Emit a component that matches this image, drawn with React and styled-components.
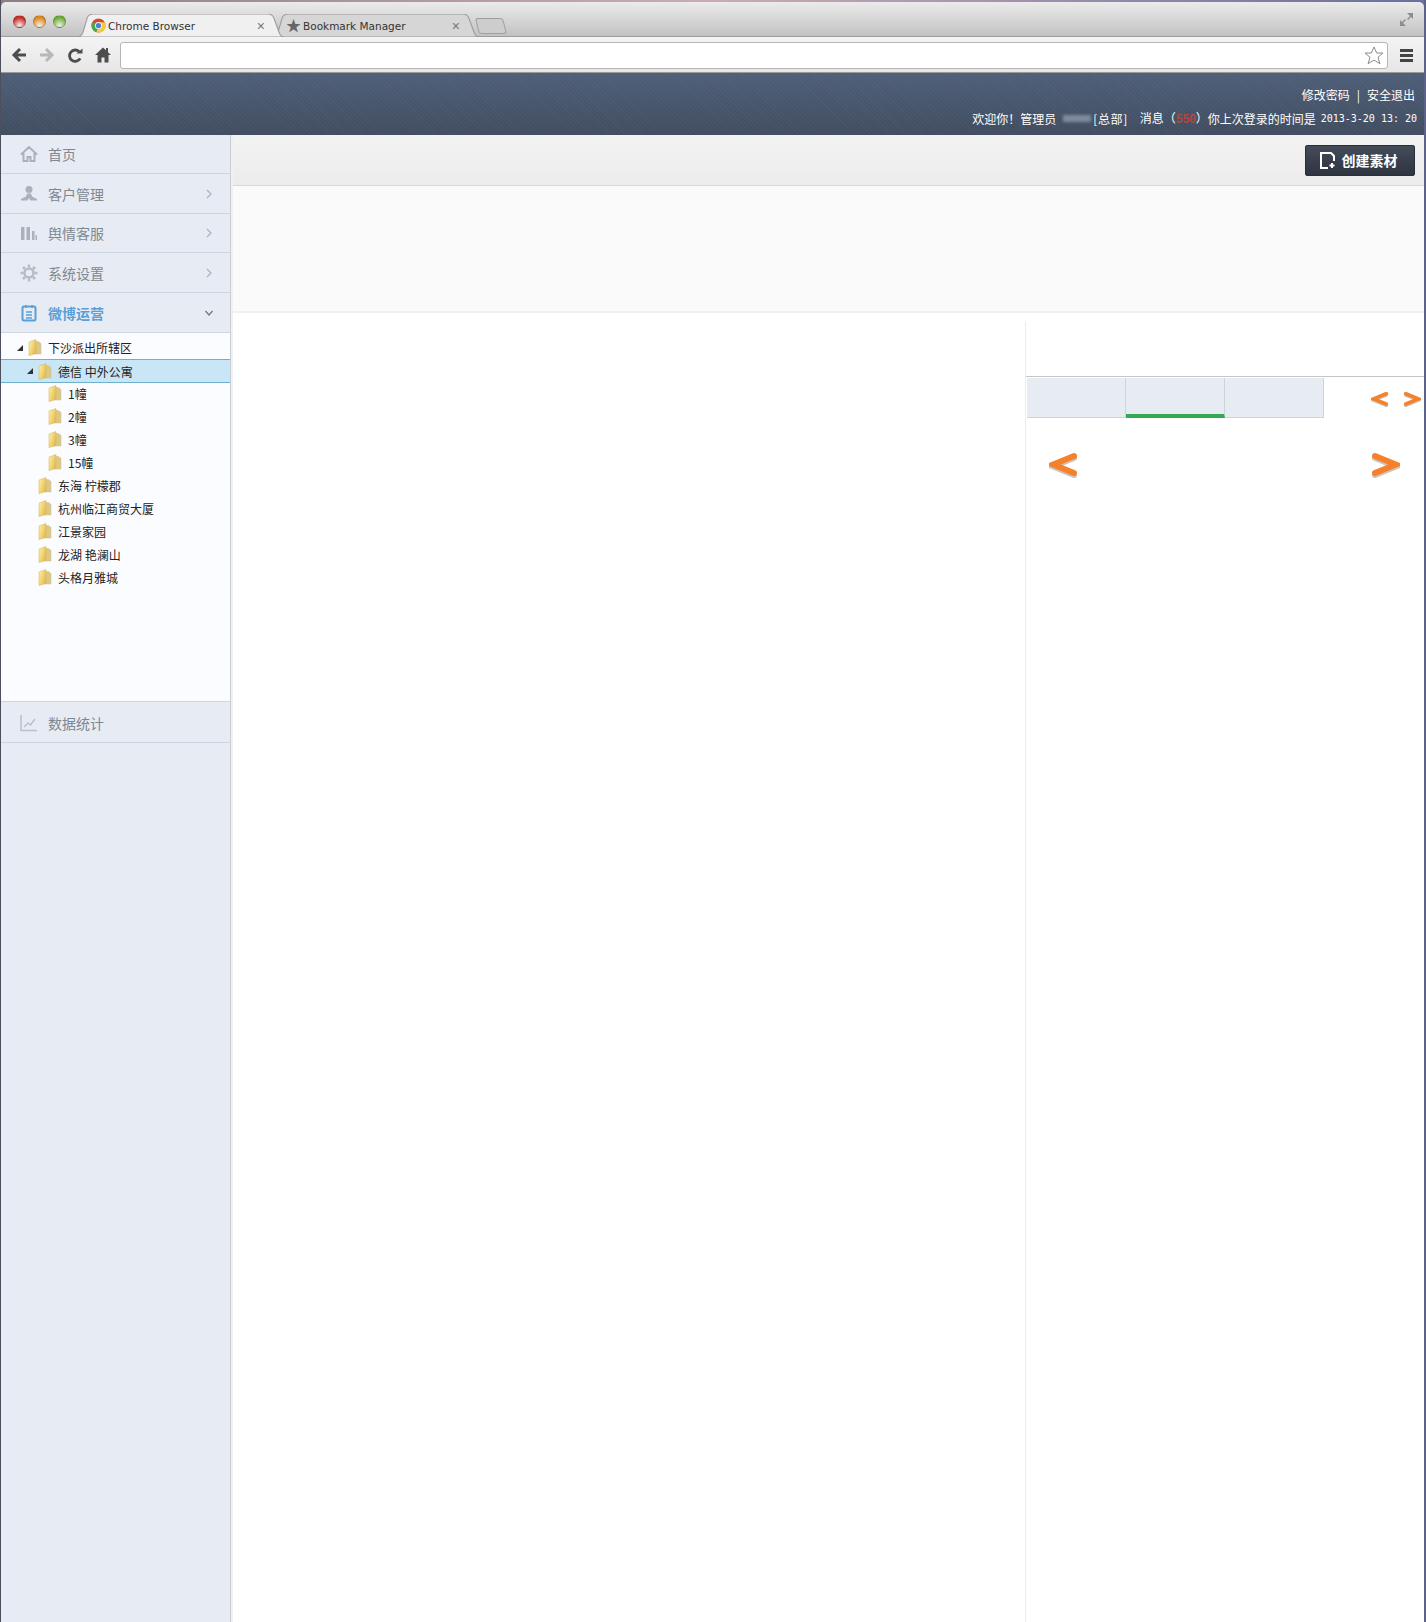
import React from "react";
import styled, { createGlobalStyle } from "styled-components";

const Global = createGlobalStyle`
html, body { margin: 0; padding: 0; background: #fff; }
body { font-family: "Liberation Sans", "Noto Sans CJK SC", sans-serif; }
* { box-sizing: border-box; }
`;

const menuTop = [
    { name: "首页", icon: "home", h: 39 },
    { name: "客户管理", icon: "user", h: 40, arrow: "right" },
    { name: "舆情客服", icon: "bars", h: 39, arrow: "right" },
    { name: "系统设置", icon: "gear", h: 40, arrow: "right" },
    { name: "微博运营", icon: "note", h: 40, arrow: "down", active: true },
];

const tree = [
    { name: "下沙派出所辖区", level: 0, open: true },
    { name: "德信 中外公寓", level: 1, open: true, selected: true },
    { name: "1幢", level: 2 },
    { name: "2幢", level: 2 },
    { name: "3幢", level: 2 },
    { name: "15幢", level: 2 },
    { name: "东海 柠檬郡", level: 1 },
    { name: "杭州临江商贸大厦", level: 1 },
    { name: "江景家园", level: 1 },
    { name: "龙湖 艳澜山", level: 1 },
    { name: "头格月雅城", level: 1 },
];

const tabPath = "M0 23C4 23 5 21 6 18L10 4C11 1 13 0 16 0H188C191 0 193 1 194 4L199 18C200 21 201 23 204 23Z";

function MenuIcon({ type }) {
    const c = type === "note" ? "#5a9fd8" : "#a9b1bc";
    if (type === "home")
        return (
            <svg width="18" height="18" viewBox="0 0 18 18" fill="none" stroke={c} strokeWidth="2">
                <path d="M1 9.500 9 2l8 7.500M3.500 8v8h4v-4h3v4h4V8" />
            </svg>
        );
    if (type === "user")
        return (
            <svg width="18" height="18" viewBox="0 0 18 18" fill={c}>
                <circle cx="9" cy="4.500" r="3.500" />
                <path d="M7 8.500h4l1 3 5 2.500v1.500h-6.500L9 13l-1.500 2.500H1V14l5-2.500z" />
            </svg>
        );
    if (type === "bars")
        return (
            <svg width="18" height="18" viewBox="0 0 18 18" fill={c}>
                <path d="M1 3h3.500v13H1zM6.500 3H10v13H6.500zM12 7h2.500v9H12zM15.500 11H17v5h-1.500z" />
            </svg>
        );
    if (type === "gear")
        return (
            <svg width="18" height="18" viewBox="0 0 18 18" fill="none" stroke="#b6bcc5">
                <circle cx="9" cy="9" r="4.500" strokeWidth="2.500" />
                <path strokeWidth="2.500" d="M9 0.500v3M9 14.500v3M0.500 9h3M14.500 9h3M3 3l2 2M13 13l2 2M15 3l-2 2M5 13l-2 2" />
            </svg>
        );
    if (type === "note")
        return (
            <svg width="18" height="18" viewBox="0 0 18 18" fill="none" stroke={c} strokeWidth="2">
                <rect x="2.500" y="2.500" width="13" height="14" rx="1.500" />
                <path d="M6 1v3M12 1v3M6 8h6M6 11h6M6 14h6" strokeWidth="1.500" />
            </svg>
        );
    return (
        <svg width="18" height="18" viewBox="0 0 18 18" fill="none" stroke="#b9c0ca">
            <path strokeWidth="1.500" d="M1 1v15.500h16" />
            <path strokeWidth="1.500" d="M4 13l4-4 2.500 2L15 5" />
        </svg>
    );
}

function Chevron({ dir }) {
    return (
        <svg width="8" height="10" viewBox="0 0 8 10" fill="none" stroke={dir === "down" ? "#6d7680" : "#a9b1bc"} strokeWidth="1.200">
            <path d={dir === "down" ? "M0.500 3 4 7l3.500-4" : "M2 1l4 4-4 4"} />
        </svg>
    );
}

function Folder() {
    return (
        <svg width="14" height="17" viewBox="0 0 14 17">
            <defs>
                <linearGradient id="fold" x1="0" y1="0" x2="1" y2="0.600">
                    <stop offset="0" stopColor="#fff3ad" />
                    <stop offset="1" stopColor="#e6bd4a" />
                </linearGradient>
            </defs>
            <path d="M7 2.500h3.500l2.500 2V15H7z" fill="#dcc885" stroke="#c9bc94" strokeWidth="0.500" />
            <path d="M1 3 8 0.500v14L1 16.500z" fill="url(#fold)" stroke="#d8b04a" strokeWidth="0.500" />
        </svg>
    );
}

function ChromeLogo() {
    return (
        <svg width="15" height="15" viewBox="0 0 16 16">
            <circle cx="8" cy="8" r="7.500" fill="#d8473a" />
            <path d="M8 8 1.500 4.200A7.500 7.500 0 0 0 6 15.200z" fill="#4fa648" />
            <path d="M8 4.500h7a7.500 7.500 0 0 1-9 10.700z" fill="#f3c93f" />
            <circle cx="8" cy="8" r="3.800" fill="#eef2f6" />
            <circle cx="8" cy="8" r="2.800" fill="#4a80d0" />
        </svg>
    );
}

function Arrow({ dir, size }) {
    const w = size === "big" ? 28 : 17;
    const h = size === "big" ? 27 : 17;
    const d = dir === "left" ? "M25 4 4 12.500 25 21" : "M3 4l21 8.500L3 21";
    return (
        <svg width={w} height={h} viewBox="0 0 28 27" fill="none" strokeLinecap="round" strokeLinejoin="miter">
            <path d={d} stroke="#c9c4be" strokeWidth="6" transform="translate(0 2)" />
            <path d={d} stroke="#f5822a" strokeWidth="6" />
        </svg>
    );
}

export default function App() {
    return (
        <>
            <Global />
            <Page>
                <Browser>
                    <TabStrip>
                        <Lights>
                            <Light color="#c9302c" />
                            <Light color="#df8a1f" />
                            <Light color="#6fae35" />
                        </Lights>
                        <Tab active>
                            <TabShape viewBox="0 0 204 23" preserveAspectRatio="none">
                                <path d={tabPath} fill="#f0f0f0" stroke="#9a9a9a" />
                            </TabShape>
                            <TabIcon><ChromeLogo /></TabIcon>
                            <TabLabel>Chrome Browser</TabLabel>
                            <TabClose>×</TabClose>
                        </Tab>
                        <Tab>
                            <TabShape viewBox="0 0 204 23" preserveAspectRatio="none">
                                <path d={tabPath} fill="#d6d6d6" stroke="#9a9a9a" />
                            </TabShape>
                            <TabIcon><Star>★</Star></TabIcon>
                            <TabLabel>Bookmark Manager</TabLabel>
                            <TabClose>×</TabClose>
                        </Tab>
                        <NewTab />
                        <Expand>
                            <svg width="15" height="15" viewBox="0 0 15 15" fill="#8d8d8d">
                                <path d="M8 1h6v6l-2-2-3 3-1-1 3-3zM7 14H1V8l2 2 3-3 1 1-3 3z" />
                            </svg>
                        </Expand>
                    </TabStrip>
                    <Toolbar>
                        <NavIcons>
                            <svg width="16" height="16" viewBox="0 0 16 16" fill="none" stroke="#4d4d4d" strokeWidth="3">
                                <path d="M15 8H3M9 2 3 8l6 6" />
                            </svg>
                            <svg width="16" height="16" viewBox="0 0 16 16" fill="none" stroke="#b8b8b8" strokeWidth="3">
                                <path d="M1 8h12M7 2l6 6-6 6" />
                            </svg>
                            <svg width="16" height="17" viewBox="0 0 17 17" fill="none" stroke="#4d4d4d" strokeWidth="3">
                                <path d="M14 11.500A6 6 0 1 1 13 4.500" />
                                <path d="M10 6.500h6.500V1z" fill="#4d4d4d" stroke="none" />
                            </svg>
                            <svg width="16" height="16" viewBox="0 0 16 16" fill="#4d4d4d">
                                <path d="M8 0.500 0 8h2.500v7.500h4v-5h3v5h4V8H16l-3-2.800V1h-2v2.300z" />
                            </svg>
                        </NavIcons>
                        <Omnibox>
                            <svg width="20" height="19" viewBox="0 0 20 19" fill="#fff" stroke="#8b8b8b">
                                <path d="M10 1l2.700 6h6.300l-5 4.200 1.900 6.500L10 14l-5.900 3.700L6 11.200 1 7h6.300z" />
                            </svg>
                        </Omnibox>
                        <Hamburger><i /><i /><i /></Hamburger>
                    </Toolbar>
                </Browser>
                <Header>
                    <HeaderLine>
                        <span>修改密码</span>
                        <Pipe>|</Pipe>
                        <span>安全退出</span>
                    </HeaderLine>
                    <HeaderLine second>
                        <span>欢迎你！管理员</span>
                        <Blur />
                        <Dept>[总部]</Dept>
                        <Msg>消息（<b>550</b>）</Msg>
                        <span>你上次登录的时间是</span>
                        <Time>2013-3-20 13: 20</Time>
                    </HeaderLine>
                </Header>
                <Main>
                    <Sidebar>
                        {menuTop.map((m) => (
                            <MenuItem key={m.name} h={m.h} active={m.active}>
                                <MenuIcon type={m.icon} />
                                <MenuText active={m.active}>{m.name}</MenuText>
                                {m.arrow && <Chevron dir={m.arrow} />}
                            </MenuItem>
                        ))}
                        <Tree>
                            {tree.map((t) => (
                                <TreeRow key={t.name} level={t.level} selected={t.selected}>
                                    <Twist>{t.open && <TwistMark />}</Twist>
                                    <Folder />
                                    <TreeText>{t.name}</TreeText>
                                </TreeRow>
                            ))}
                        </Tree>
                        <MenuItem h={41} stat>
                            <MenuIcon type="chart" />
                            <MenuText>数据统计</MenuText>
                        </MenuItem>
                    </Sidebar>
                    <Content>
                        <TopBar>
                            <CreateBtn>
                                <svg width="17" height="17" viewBox="0 0 17 17" fill="none" stroke="#fff" strokeWidth="2">
                                    <path d="M9 16H2V1h10l3 3v5M13 11v5M10.500 13.500h5" />
                                </svg>
                                创建素材
                            </CreateBtn>
                        </TopBar>
                        <Panel />
                        <Columns>
                            <LeftCol />
                            <RightCol>
                                <Tabs>
                                    <TabCell />
                                    <TabCell current />
                                    <TabCell />
                                    <SmallArrows>
                                        <Arrow dir="left" />
                                        <Arrow dir="right" />
                                    </SmallArrows>
                                </Tabs>
                                <BigArrows>
                                    <Arrow dir="left" size="big" />
                                    <Arrow dir="right" size="big" />
                                </BigArrows>
                            </RightCol>
                        </Columns>
                    </Content>
                </Main>
            </Page>
        </>
    );
}

const Page = styled.div`
width: 1426px;
height: 1622px;
overflow: hidden;
display: flex;
flex-direction: column;
background: #fff;
border-right: 2px solid #5c6288;
border-left: 1px solid #4b4f5e;
`;

const Browser = styled.div`
height: 73px;
flex: none;
padding-top: 2px;
background: linear-gradient(90deg, #8a7f88, #c9acb4 50%, #6a6f9f);
`;

const TabStrip = styled.div`
height: 35px;
padding-top: 12px;
padding-left: 76px;
display: flex;
background: linear-gradient(#ebebeb, #c2c2c2);
border-bottom: 1px solid #9c9c9c;
border-radius: 5px 5px 0 0;
position: relative;
`;

const Lights = styled.div`
position: absolute;
left: 12px;
top: 13px;
display: flex;
gap: 7px;
`;

const Light = styled.div`
width: 13px;
height: 13px;
border-radius: 50%;
background: radial-gradient(circle at 50% 85%, #ffffffaa 0, ${(p) => p.color} 70%);
border: 1px solid #0003;
`;

const Tab = styled.div`
position: relative;
width: 207px;
height: 23px;
margin-right: -12px;
display: flex;
align-items: center;
padding-left: 14px;
z-index: ${(p) => (p.active ? 2 : 1)};
`;

const TabShape = styled.svg`
position: absolute;
inset: 0;
width: 100%;
height: 100%;
`;

const TabIcon = styled.span`
position: relative;
display: flex;
width: 17px;
`;

const Star = styled.span`
color: #666;
font-size: 15px;
line-height: 15px;
`;

const TabLabel = styled.span`
position: relative;
flex: 1;
font-family: "DejaVu Sans", sans-serif;
font-size: 10.500px;
color: #333;
`;

const TabClose = styled.span`
position: relative;
margin-right: 19px;
font-size: 14px;
color: #777;
`;

const NewTab = styled.div`
width: 28px;
height: 16px;
margin: 4px 0 0 10px;
border: 1px solid #a0a0a0;
border-radius: 3px;
transform: skewX(14deg);
background: #cdcdcd;
`;

const Expand = styled.div`
margin-left: auto;
margin-right: 10px;
margin-top: -2px;
`;

const Toolbar = styled.div`
height: 36px;
display: flex;
align-items: center;
padding: 1px 11px 0 10px;
background: linear-gradient(#f4f4f4, #e6e6e6);
border-bottom: 1px solid #9a9a9a;
`;

const NavIcons = styled.div`
display: flex;
align-items: center;
gap: 12px;
width: 109px;
flex: none;
`;

const Omnibox = styled.div`
flex: 1;
height: 27px;
background: #fff;
border: 1px solid #b5b5b5;
border-radius: 3px;
display: flex;
align-items: center;
justify-content: flex-end;
padding-right: 3px;
`;

const Hamburger = styled.div`
width: 25px;
display: flex;
flex-direction: column;
align-items: flex-end;
gap: 2px;
i {
    display: block;
    width: 13px;
    height: 3px;
    background: #444;
}
`;

const Header = styled.div`
height: 62px;
flex: none;
padding: 9px 9px 0 0;
color: #fff;
font-family: "Noto Sans CJK SC", sans-serif;
font-size: 12px;
background-color: #4a5a70;
background-image:
    repeating-linear-gradient(45deg, #ffffff07 0 1px, transparent 1px 3px),
    linear-gradient(#4e5f78, #414d60);
`;

const HeaderLine = styled.div`
display: flex;
justify-content: flex-end;
align-items: center;
height: 24px;
span { white-space: nowrap; }
${(p) => p.second && "margin-right: -2px;"}
`;

const Pipe = styled.span`
margin: 0 7px;
`;

const Blur = styled.span`
width: 28px;
height: 7px;
margin: 0 2px 0 7px;
background: #7f8b9d;
filter: blur(1.500px);
`;

const Dept = styled.span`
letter-spacing: 0.600px;
`;

const Msg = styled.span`
margin: 0 0 0 12px;
b {
    font-family: "Liberation Mono", monospace;
    font-size: 12px;
    font-weight: 700;
    letter-spacing: -0.600px;
    color: #b0483f;
}
`;

const Time = styled.span`
margin-left: 5px;
font-size: 10px;
font-family: "DejaVu Sans Mono", monospace;
`;

const Main = styled.div`
flex: 1;
display: flex;
min-height: 0;
`;

const Sidebar = styled.div`
width: 230px;
flex: none;
background: #e7ecf4;
border-right: 1px solid #c9cfd8;
box-shadow: 2px 0 0 #f0f0f0;
`;

const MenuItem = styled.div`
height: ${(p) => p.h}px;
display: flex;
align-items: center;
padding: 0 17px 0 19px;
border-bottom: 1px solid #cfd5de;
${(p) => p.stat && "border-top: 1px solid #cfd5de; height: 42px; padding-top: 1px;"}
`;

const MenuText = styled.div`
flex: 1;
margin-left: 10px;
font-family: "Noto Sans CJK SC", sans-serif;
font-size: 14px;
font-weight: ${(p) => (p.active ? 700 : 400)};
color: ${(p) => (p.active ? "#5a9fd8" : "#7f8790")};
`;

const Tree = styled.div`
height: 368px;
padding-top: 3px;
background: #fafcff;
`;

const TreeRow = styled.div`
height: ${(p) => (p.selected ? 24 : 23)}px;
margin-bottom: ${(p) => (p.selected ? -1 : 0)}px;
display: flex;
align-items: center;
padding-left: ${(p) => 16 + p.level * 10}px;
${(p) => p.selected && "background: #c8e6f6; border-top: 1px solid #6fb0cc; border-bottom: 1px solid #6fb0cc;"}
`;

const Twist = styled.span`
width: 11px;
display: flex;
`;

const TwistMark = styled.i`
width: 0;
height: 0;
border-left: 6px solid transparent;
border-bottom: 6px solid #333;
`;

const TreeText = styled.span`
margin-left: 6px;
font-family: "Noto Sans CJK SC", sans-serif;
font-size: 12px;
color: #222;
`;

const Content = styled.div`
flex: 1;
display: flex;
flex-direction: column;
margin-left: 2px;
min-width: 0;
`;

const TopBar = styled.div`
height: 51px;
flex: none;
display: flex;
justify-content: flex-end;
align-items: flex-start;
padding: 10px 9px 0 0;
background: linear-gradient(#f3f3f3, #ececec);
border-bottom: 1px solid #d8d8d8;
`;

const CreateBtn = styled.div`
width: 110px;
height: 31px;
display: flex;
align-items: center;
justify-content: center;
gap: 6px;
padding: 0 4px 1px 0;
color: #fff;
font-family: "Noto Sans CJK SC", sans-serif;
font-size: 14px;
font-weight: 700;
background: linear-gradient(#444c5a, #2e3440);
border: 1px solid #2a2e36;
border-radius: 2px;
`;

const Panel = styled.div`
height: 127px;
flex: none;
background: #fafafa;
border-bottom: 2px solid #f0f0f0;
`;

const Columns = styled.div`
flex: 1;
display: flex;
padding-top: 9px;
min-height: 0;
`;

const LeftCol = styled.div`
width: 793px;
flex: none;
border-right: 1px solid #ececec;
`;

const RightCol = styled.div`
flex: 1;
padding-top: 54px;
`;

const Tabs = styled.div`
display: flex;
padding: 1px 0 0 1px;
border-top: 1px solid #c4c6cb;
`;

const TabCell = styled.div`
width: 99px;
height: 40px;
background: #e7ecf2;
border-right: 1px solid #ced4db;
border-bottom: ${(p) => (p.current ? "4px solid #34a853" : "1px solid #ced4db")};
`;

const SmallArrows = styled.div`
display: flex;
gap: 16px;
margin-left: 47px;
padding-top: 13px;
`;

const BigArrows = styled.div`
display: flex;
justify-content: space-between;
padding: 34px 24px 0 23px;
`;
